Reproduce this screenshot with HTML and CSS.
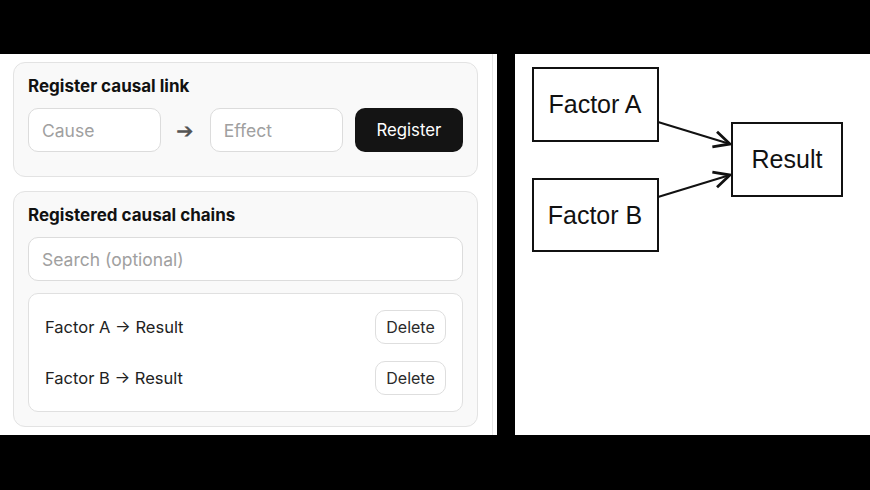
FILE: index.html
```html
<!DOCTYPE html>
<html>
  <head>
    <meta charset="utf-8">
    <title>Causal links</title>
    <link rel="stylesheet" href="styles.css">
  </head>
  <body>
    <div class="layout">
      <div class="side">
        <div class="panel">
          <section class="card">
            <h2 class="card-title">Register causal link</h2>
            <div class="link-row">
              <input class="field" type="text" placeholder="Cause">
              <span class="link-arrow">&#10132;</span>
              <input class="field" type="text" placeholder="Effect">
              <button class="btn-dark">Register</button>
            </div>
          </section>
          <section class="card">
            <h2 class="card-title">Registered causal chains</h2>
            <input class="field field-wide" type="text" placeholder="Search (optional)">
            <ul class="chain-list">
              <li class="chain">
                <span>Factor A &rarr; Result</span>
                <button class="btn-light">Delete</button>
              </li>
              <li class="chain">
                <span>Factor B &rarr; Result</span>
                <button class="btn-light">Delete</button>
              </li>
            </ul>
          </section>
        </div>
      </div>
      <div class="graph">
        <svg width="355" height="381" viewBox="0 0 355 381">
          <defs>
            <marker id="vee" markerWidth="20" markerHeight="20" refX="18" refY="10" orient="auto" markerUnits="userSpaceOnUse">
              <path d="M2,2 L18,10 L2,18" fill="none" stroke="#111" stroke-width="2.8" stroke-linejoin="miter"/>
            </marker>
          </defs>
          <g class="node">
            <rect x="18" y="14" width="125" height="73"/>
            <text x="80" y="59">Factor A</text>
          </g>
          <g class="node">
            <rect x="18" y="125" width="125" height="72"/>
            <text x="80" y="170">Factor B</text>
          </g>
          <g class="node">
            <rect x="217" y="69" width="110" height="73"/>
            <text x="272" y="114">Result</text>
          </g>
          <line class="edge" x1="143" y1="68" x2="215" y2="90" marker-end="url(#vee)"/>
          <line class="edge" x1="143" y1="143" x2="215" y2="121" marker-end="url(#vee)"/>
        </svg>
      </div>
    </div>
  </body>
</html>
```

FILE: styles.css
```css
* {
  box-sizing: border-box;
}
body {
  margin: 0;
  padding-top: 54px;
  background: #000;
  font-family: Inter, "Noto Sans", sans-serif;
  color: #1a1a1a;
}
.layout {
  display: flex;
  gap: 18px;
  height: 381px;
}
.side {
  width: 497px;
  background: #fff;
}
.panel {
  width: 493px;
  height: 100%;
  padding: 8px 14px 0 13px;
  border-right: 1px solid #e6e6e6;
  display: flex;
  flex-direction: column;
  gap: 14px;
}
.card {
  background: #f9f9f9;
  border: 1px solid #e3e3e3;
  border-radius: 12px;
  padding: 12px 14px 24px;
}
.card + .card {
  padding-bottom: 14px;
}
.card-title {
  margin: 0 0 11px;
  font-size: 17px;
  line-height: 22px;
  font-weight: 700;
  color: #111;
}
.link-row {
  display: flex;
  align-items: center;
  gap: 12px;
}
.field {
  width: 133px;
  height: 44px;
  padding: 0 13px;
  border: 1px solid #dcdcdc;
  border-radius: 10px;
  background: #fff;
  font-family: inherit;
  font-size: 17.5px;
  color: #222;
}
.field::placeholder {
  color: #a0a0a0;
}
.field-wide {
  display: block;
  width: 100%;
}
.link-arrow {
  width: 25px;
  text-align: center;
  font-size: 21px;
  color: #555;
}
.btn-dark {
  width: 109px;
  height: 44px;
  border: 0;
  border-radius: 10px;
  background: #141414;
  color: #fff;
  font-family: inherit;
  font-size: 16.8px;
}
.chain-list {
  list-style: none;
  margin: 12px 0 0;
  padding: 16px 16px;
  background: #fff;
  border: 1px solid #e0e0e0;
  border-radius: 10px;
  display: flex;
  flex-direction: column;
  gap: 17px;
}
.chain {
  display: flex;
  justify-content: space-between;
  align-items: center;
  font-size: 16.5px;
  color: #222;
}
.btn-light {
  height: 34px;
  width: 71px;
  padding: 0;
  border: 1px solid #dedede;
  border-radius: 10px;
  background: #fff;
  font-family: inherit;
  font-size: 16px;
  color: #2a2a2a;
}
.graph {
  flex: 1;
  background: #fff;
}
.graph svg {
  display: block;
}
.node rect {
  fill: #fff;
  stroke: #111;
  stroke-width: 2;
}
.node text {
  font-family: "Liberation Sans", Arial, sans-serif;
  font-size: 25px;
  text-anchor: middle;
  fill: #111;
}
.edge {
  stroke: #111;
  stroke-width: 2;
}
```
